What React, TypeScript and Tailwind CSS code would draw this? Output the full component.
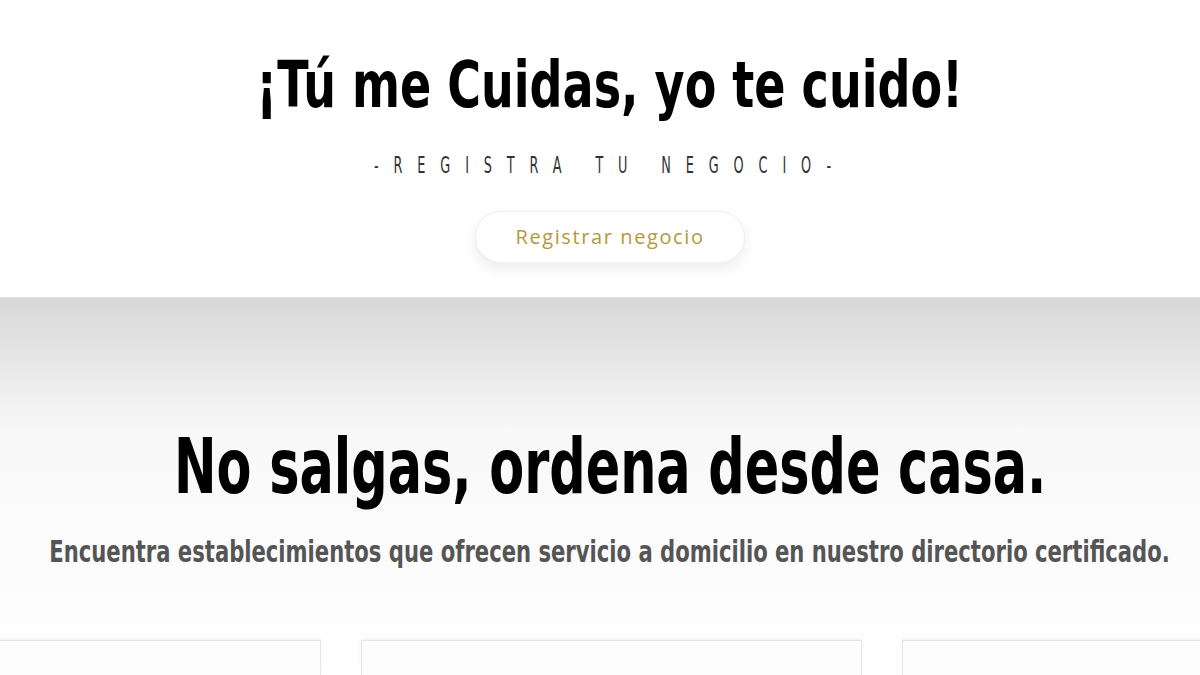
import React from "react";

export default function App() {
  const display = { fontFamily: '"DejaVu Sans Condensed", "DejaVu Sans", sans-serif' };
  return (
    <div className="w-[1200px] h-[675px] overflow-hidden bg-white">
      <section className="h-[297px] bg-white flex flex-col items-center pt-[53px] pl-[20px]">
        <h1 style={display} className="inline-block whitespace-nowrap scale-x-[0.80] text-[64px] leading-none font-bold text-black">
          ¡Tú me Cuidas, yo te cuido!
        </h1>
        <div style={display} className="mt-[37px] inline-block whitespace-nowrap scale-x-[0.62] text-[23px] leading-none font-extralight text-[#333] tracking-[24px] pl-[24px] -ml-[14px]">
          -REGISTRA TU NEGOCIO-
        </div>
        <button
          style={{ fontFamily: '"Open Sans", "Lato", sans-serif' }}
          className="mt-[34px] w-[270px] h-[52px] rounded-full bg-white text-[#b5983a] text-[20px] tracking-[1.6px] shadow-[0_6px_14px_rgba(0,0,0,0.08)] border border-[#f3f0ee]"
        >
          Registrar negocio
        </button>
      </section>
      <section className="h-[378px] bg-gradient-to-b from-[#d8d8d8] via-[#f8f8f8] via-35% to-white flex flex-col items-center border-t border-[#e2e2e2]">
        <div className="w-full flex flex-col items-center pl-[20px]">
          <h2 style={display} className="mt-[130px] inline-block whitespace-nowrap scale-x-[0.734] text-[77px] leading-none font-bold text-black">
            No salgas, ordena desde casa.
          </h2>
          <p style={display} className="mt-[32px] inline-block whitespace-nowrap scale-x-[0.783] text-[30px] leading-none font-bold text-[#555]">
            Encuentra establecimientos que ofrecen servicio a domicilio en nuestro directorio certificado.
          </p>
        </div>
        <div className="mt-[73px] w-full flex gap-[40px]">
          <div className="w-[321px] h-[60px] bg-[#fdfdfd] border border-[#e6e6e6] border-l-0 shadow-[0_-1px_3px_rgba(0,0,0,0.05)]" />
          <div className="w-[501px] h-[60px] bg-[#fdfdfd] border border-[#e6e6e6] shadow-[0_-1px_3px_rgba(0,0,0,0.05)]" />
          <div className="flex-1 h-[60px] bg-[#fdfdfd] border border-[#e6e6e6] border-r-0 shadow-[0_-1px_3px_rgba(0,0,0,0.05)]" />
        </div>
      </section>
    </div>
  );
}
